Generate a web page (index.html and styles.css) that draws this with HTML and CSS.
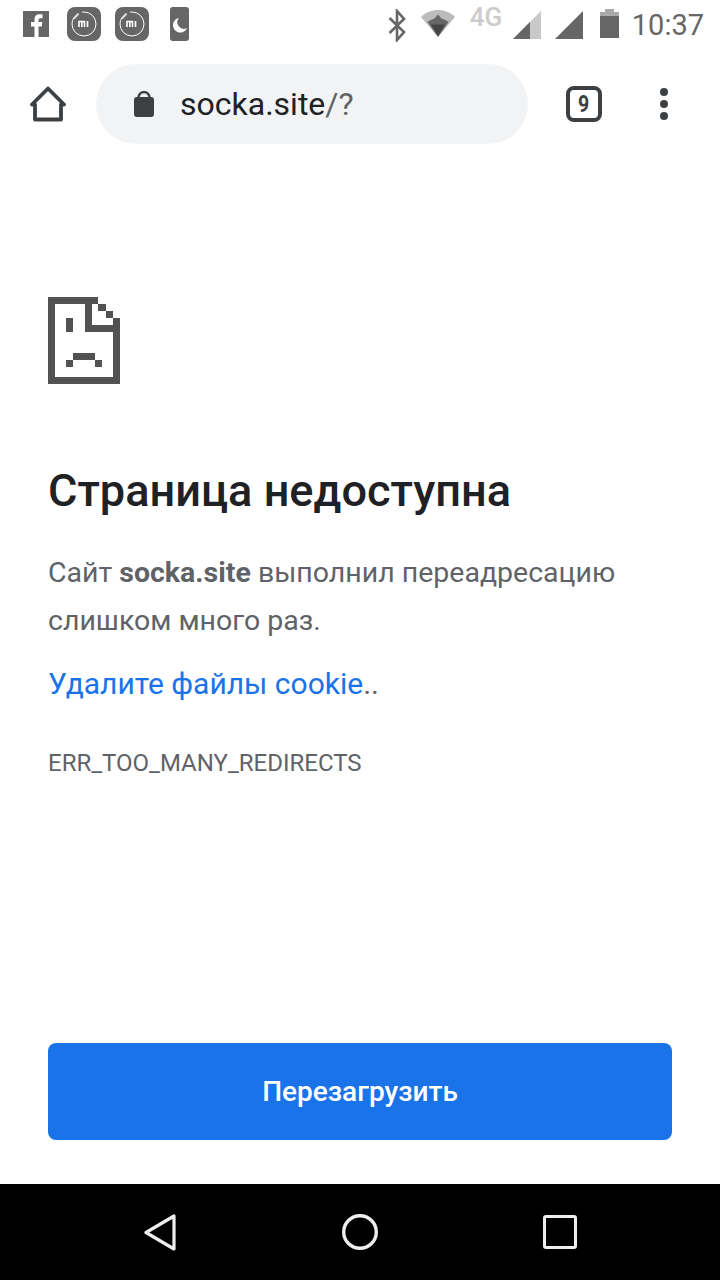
FILE: index.html
```html
<!DOCTYPE html>
<html lang="ru">
<head>
<meta charset="utf-8">
<title>Страница недоступна</title>
<link rel="stylesheet" href="styles.css">
</head>
<body>
<div class="screen">
  <header class="status">
    <div class="status-left">
      <svg class="ico-fb" viewBox="0 0 26 26"><rect width="26" height="26" fill="#666"/><path d="M11.500 26V15.500H8V11h3.500V8.200C11.500 4.800 13.500 3.300 16.300 3.300c1.300 0 2.700.2 3.200.3v3.700h-2c-1.600 0-2 .8-2 2V11h3.800l-.6 4.500h-3.200V26z" fill="#fff"/></svg>
      <svg class="ico-mi" viewBox="0 0 34 34"><rect width="34" height="34" rx="8" fill="#666"/><circle cx="17" cy="17" r="12" fill="none" stroke="#fff" stroke-width="1" stroke-dasharray="44 10 22"/><path d="M7 11.500l4.500-5" stroke="#ddd" stroke-width="2"/><path d="M12 20v-5.500h5.500V20M14.800 15v5M20.500 14v6" fill="none" stroke="#fff" stroke-width="1.600"/></svg>
      <svg class="ico-mi" viewBox="0 0 34 34"><rect width="34" height="34" rx="8" fill="#666"/><circle cx="17" cy="17" r="12" fill="none" stroke="#fff" stroke-width="1" stroke-dasharray="44 10 22"/><path d="M7 11.500l4.500-5" stroke="#ddd" stroke-width="2"/><path d="M12 20v-5.500h5.500V20M14.800 15v5M20.500 14v6" fill="none" stroke="#fff" stroke-width="1.600"/></svg>
      <svg class="ico-moon" viewBox="0 0 19 34"><rect width="19" height="34" rx="3" fill="#666"/><path d="M9 11A7.300 7.300 0 1 0 17 21 6.500 6.500 0 0 1 9 11z" fill="#fff"/></svg>
    </div>
    <div class="status-right">
      <svg class="ico-bt" viewBox="0 0 18 33"><path d="M1.500 9L16 23l-7 8V2l7 8L1.500 24" fill="none" stroke="#666" stroke-width="2.600"/></svg>
      <svg class="ico-wifi" viewBox="0 0 34 29"><path d="M0 8C5 3 11 1 17 1s12 2 17 7L17 28z" fill="#bbb"/><path d="M6.500 13C9.500 10.500 13 9.500 17 9.500s7.500 1 10.500 3.500L17 28z" fill="#666"/><path d="M17 5.500l7 8H10z" fill="#666"/><path d="M10 15.500h14L17 27z" fill="#444"/></svg>
      <span class="net">4G</span>
      <svg class="ico-sig" viewBox="0 0 28 28"><path d="M28 0v28H0z" fill="#c8c8c8"/><path d="M17 11v17H0z" fill="#666"/></svg>
      <svg class="ico-sig2" viewBox="0 0 28 28"><path d="M28 0v28H0z" fill="#666"/></svg>
      <svg class="ico-bat" viewBox="0 0 19 29"><path d="M5 0h9v3h5v26H0V3h5z" fill="#666"/><path d="M0 3h19v4H0zM5 0h9v3H5z" fill="#aaa"/></svg>
      <span class="clock">10:37</span>
    </div>
  </header>
  <nav class="toolbar">
    <svg class="ico-home" viewBox="0 0 36 36"><path d="M5 18.500H2L18 2.500l16 16h-3V33.500H5z" fill="none" stroke="#3c4043" stroke-width="3.800" stroke-linejoin="round"/></svg>
    <div class="omnibox">
      <svg class="ico-lock" viewBox="0 0 20 26"><path d="M4.500 9V6.500a5.500 5.500 0 0 1 11 0V9" fill="none" stroke="#3c4043" stroke-width="2.400"/><rect y="6" width="20" height="20" rx="3" fill="#3c4043"/></svg>
      <span class="url">socka.site<span class="url-path">/?</span></span>
    </div>
    <div class="tabs"><span class="tabs-num">9</span></div>
    <div class="menu"><i></i><i></i><i></i></div>
  </nav>
  <main class="page">
    <svg class="sad" viewBox="0 0 72 87" shape-rendering="crispEdges" fill="#525252">
      <rect width="50" height="7"/><rect width="7" height="87"/><rect y="80" width="72" height="7"/><rect x="65" y="21" width="7" height="66"/><rect x="37" width="7" height="35"/><rect x="37" y="28" width="35" height="7"/><rect x="50" y="7" width="8" height="7"/><rect x="58" y="14" width="7" height="7"/><rect x="18" y="21" width="7" height="14"/><rect x="25" y="56" width="22" height="7"/><rect x="18" y="63" width="7" height="7"/><rect x="47" y="63" width="7" height="7"/>
    </svg>
    <h1 class="title">Страница недоступна</h1>
    <p class="desc">Сайт <b>socka.site</b> выполнил переадресацию слишком много раз.</p>
    <a class="link"><span class="link-text">Удалите файлы cookie</span>..</a>
    <div class="code">ERR_TOO_MANY_REDIRECTS</div>
    <button class="reload">Перезагрузить</button>
  </main>
  <footer class="navbar">
    <div class="nav-cell"><svg class="nav-back" viewBox="0 0 32 37"><path d="M2 18.500L30 2v33z" fill="none" stroke="#eee" stroke-width="3.200" stroke-linejoin="round"/></svg></div>
    <div class="nav-cell"><svg class="nav-home" viewBox="0 0 36 36"><circle cx="18" cy="18" r="16.300" fill="none" stroke="#eee" stroke-width="3.400"/></svg></div>
    <div class="nav-cell"><svg class="nav-recent" viewBox="0 0 34 34"><rect x="1.500" y="1.500" width="31" height="31" rx="1.500" fill="none" stroke="#eee" stroke-width="3"/></svg></div>
  </footer>
</div>
</body>
</html>
```
FILE: styles.css
```css
* { box-sizing: border-box; }
html, body { margin: 0; padding: 0; }
body { background: #fff; font-family: Roboto, "Liberation Sans", sans-serif; }
.screen { width: 720px; height: 1280px; display: flex; flex-direction: column; overflow: hidden; background: #fff; }

.status { height: 48px; flex: none; display: flex; justify-content: space-between; align-items: flex-start; }
.status-left { display: flex; align-items: center; padding: 7px 0 0 23px; }
.ico-fb { width: 26px; height: 26px; margin-right: 18px; }
.ico-mi { width: 34px; height: 34px; margin-right: 14px; }
.ico-moon { width: 19px; height: 34px; margin-left: 7px; }
.status-right { display: flex; align-items: flex-start; padding-right: 16px; }
.ico-bt { width: 18px; height: 33px; margin: 9px 0 0 20px; }
.ico-wifi { width: 34px; height: 29px; margin: 9px 0 0 15px; }
.net { font-size: 26px; font-weight: 500; color: #ccc; margin: 3px 0 0 15px; line-height: 28px; width: 33px; }
.ico-sig { width: 28px; height: 28px; margin: 11px 0 0 10px; }
.ico-sig2 { width: 28px; height: 28px; margin: 11px 0 0 14px; }
.ico-bat { width: 19px; height: 29px; margin: 9px 0 0 17px; }
.clock { font-size: 29px; color: #666; line-height: 34px; margin: 8px 0 0 13px; }

.toolbar { height: 112px; flex: none; display: flex; align-items: flex-start; }
.ico-home { width: 36px; height: 36px; margin: 38px 0 0 30px; flex: none; }
.omnibox { width: 432px; height: 80px; margin: 16px 0 0 30px; border-radius: 40px; background: #f1f3f4; display: flex; align-items: center; padding-left: 38px; flex: none; }
.ico-lock { width: 20px; height: 26px; margin-right: 26px; flex: none; }
.url { font-size: 32px; color: #202124; }
.url-path { color: #5f6368; }
.tabs { width: 36px; height: 36px; margin: 38px 0 0 38px; border: 4px solid #3c4043; border-radius: 8px; display: flex; align-items: center; justify-content: center; font-size: 23px; font-weight: 700; color: #3c4043; flex: none; }
.tabs-num { display: inline-block; transform: scaleX(.85); }
.menu { display: flex; flex-direction: column; gap: 4px; margin: 40px 0 0 58px; }
.menu i { display: block; width: 8px; height: 8px; border-radius: 50%; background: #3c4043; }

.page { flex: 1; display: flex; flex-direction: column; padding: 137px 48px 44px; }
.sad { width: 72px; height: 87px; flex: none; }
.title { margin: 79px 0 0; font-size: 45.100px; line-height: 56px; font-weight: 500; color: #202124; }
.desc { margin: 30px 0 0; font-size: 28.500px; line-height: 48px; color: #5f6368; }
.desc b { font-weight: 700; }
.link { margin-top: 14px; font-size: 30px; line-height: 49px; color: #5f6368; }
.link-text { color: #1a73e8; }
.code { margin-top: 40px; font-size: 24px; line-height: 30px; color: #5f6368; }
.reload { margin-top: auto; width: 624px; height: 97px; border: 0; border-radius: 8px; background: #1a73e8; color: #fff; font-family: inherit; font-size: 28px; font-weight: 500; }

.navbar { height: 96px; flex: none; background: #000; display: flex; align-items: center; justify-content: center; }
.nav-cell { width: 200px; display: flex; justify-content: center; align-items: center; }
.nav-back { width: 32px; height: 37px; }
.nav-home { width: 36px; height: 36px; }
.nav-recent { width: 34px; height: 34px; }
```
